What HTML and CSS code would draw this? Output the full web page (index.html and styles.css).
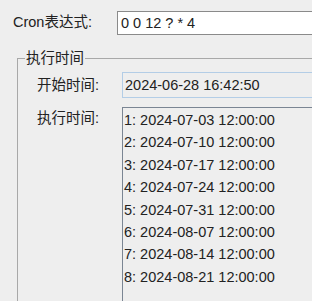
FILE: index.html
```html
<!DOCTYPE html>
<html lang="zh">
<head>
    <meta charset="UTF-8">
    <meta name="viewport" content="width=device-width, initial-scale=1.0">
    <title>Cron</title>
    <link rel="stylesheet" href="styles.css">
</head>
<body>

    <!-- 表达式输入 -->
    <div class="cron-row">
        <label class="cron-label" for="cron">Cron表达式:</label>
        <div class="field cron-field" id="cron">0 0 12 ? * 4</div>
    </div>

    <!-- 执行时间分组 -->
    <fieldset class="group">
        <legend>执行时间</legend>

        <div class="row start-row">
            <label class="row-label">开始时间:</label>
            <div class="field start-field">2024-06-28 16:42:50</div>
        </div>

        <div class="row list-row">
            <label class="row-label">执行时间:</label>
            <div class="time-list">
                <div class="item">1: 2024-07-03 12:00:00</div>
                <div class="item">2: 2024-07-10 12:00:00</div>
                <div class="item">3: 2024-07-17 12:00:00</div>
                <div class="item">4: 2024-07-24 12:00:00</div>
                <div class="item">5: 2024-07-31 12:00:00</div>
                <div class="item">6: 2024-08-07 12:00:00</div>
                <div class="item">7: 2024-08-14 12:00:00</div>
                <div class="item">8: 2024-08-21 12:00:00</div>
            </div>
        </div>
    </fieldset>

</body>
</html>
```

FILE: styles.css
```css
body {
    margin: 0;
    padding: 0;
    background-color: #eeeeee;
    color: #222;
    font-family: "Liberation Sans", "Noto Sans CJK SC", sans-serif;
    font-size: 14.5px;
    width: 312px;
    height: 301px;
    overflow: hidden;
}

.cron-row {
    display: flex;
    align-items: flex-start;
    padding: 11px 0 0 13px;
}

.cron-label {
    width: 104px;
    line-height: 20px;
    padding-top: 1px;
}

.field {
    flex: 1;
    margin-right: -20px;
    padding-left: 2px;
}

.cron-field {
    height: 22px;
    line-height: 22px;
    border: 1px solid #8a8a8a;
    background-color: #fff;
    padding-left: 3px;
}

.group {
    margin: 14px 0 0 17px;
    padding: 0;
    width: 360px;
    height: 300px;
    border: 1px solid #a8a8a8;
}

.group legend {
    margin-left: 7px;
    padding: 0 1px;
    line-height: 18px;
}

.row {
    display: flex;
    align-items: flex-start;
}

.row-label {
    width: 85px;
    padding-left: 19px;
    line-height: 22.4px;
}

.start-row {
    margin-top: 5px;
    align-items: center;
}

.start-field {
    height: 24px;
    line-height: 24px;
    border: 1px solid #b3cde6;
    flex: none;
    width: 260px;
}

.list-row {
    margin-top: 9px;
}

.time-list {
    flex: none;
    width: 260px;
    height: 240px;
    border: 1px solid #7a8593;
    padding: 1px 0 0 1px;
}

.item {
    line-height: 22.4px;
    white-space: nowrap;
}
```
